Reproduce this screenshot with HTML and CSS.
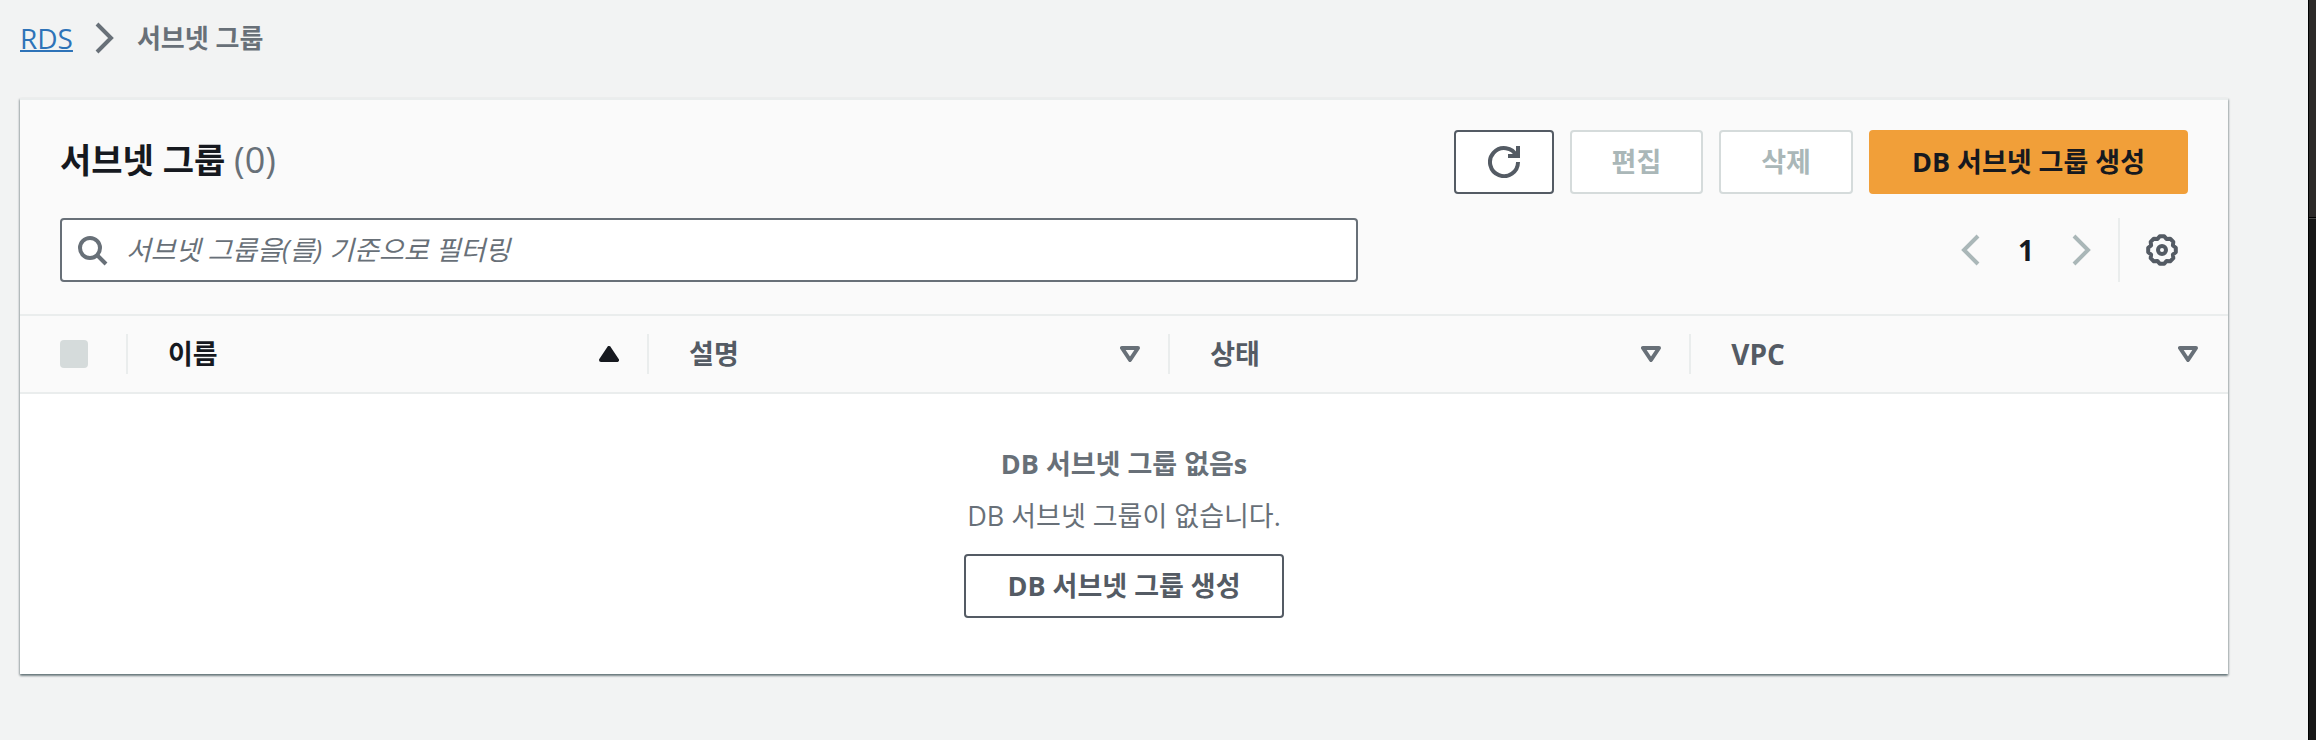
FILE: index.html
```html
<!DOCTYPE html>
<html lang="ko">
<head>
    <meta charset="UTF-8">
    <meta name="viewport" content="width=device-width, initial-scale=1.0">
    <title>RDS - 서브넷 그룹</title>
    <link rel="stylesheet" href="styles.css">
</head>
<body>
    <main class="page">
        <nav class="breadcrumb">
            <a href="#">RDS</a>
            <svg class="chevron" viewBox="0 0 16 16"><path d="M4 1l7 7-7 7"/></svg>
            <span class="current">서브넷 그룹</span>
        </nav>

        <section class="panel">
            <div class="panel-header">
                <div class="title-row">
                    <h1>서브넷 그룹 <span class="count">(0)</span></h1>
                    <div class="actions">
                        <button type="button" class="btn btn-icon" aria-label="새로 고침">
                            <svg class="icon" viewBox="0 0 16 16">
                                <path d="M10 5h5V0"/>
                                <path d="M15 8a7 7 0 1 1-.7-3"/>
                            </svg>
                        </button>
                        <button type="button" class="btn" disabled>편집</button>
                        <button type="button" class="btn" disabled>삭제</button>
                        <button type="button" class="btn btn-create btn-primary">DB 서브넷 그룹 생성</button>
                    </div>
                </div>

                <div class="filter-row">
                    <label class="search">
                        <svg class="icon" viewBox="0 0 16 16">
                            <circle cx="7" cy="7" r="5"/>
                            <path d="M10.5 10.5l4.5 4.5"/>
                        </svg>
                        <input type="text" placeholder="서브넷 그룹을(를) 기준으로 필터링" aria-label="서브넷 그룹 필터">
                    </label>
                    <div class="tools">
                        <div class="pagination">
                            <button type="button" aria-label="이전" disabled>
                                <svg class="chevron" viewBox="0 0 16 16"><path d="M12 1L5 8l7 7"/></svg>
                            </button>
                            <button type="button" class="page-number">1</button>
                            <button type="button" aria-label="다음" disabled>
                                <svg class="chevron" viewBox="0 0 16 16"><path d="M4 1l7 7-7 7"/></svg>
                            </button>
                        </div>
                        <button type="button" class="settings" aria-label="기본 설정">
                            <svg class="icon" viewBox="0 0 16 16">
                                <path d="M6.9 1.1h2.2l1.16 1.45 1.84-.21 1.56 1.56-.21 1.84L14.9 6.9v2.2l-1.45 1.16.21 1.84-1.56 1.56-1.84-.21L9.1 14.9H6.9l-1.16-1.45-1.84.21-1.56-1.56.21-1.84L1.1 9.1V6.9l1.45-1.16-.21-1.84L3.9 2.34l1.84.21z"/>
                                <circle cx="8" cy="8" r="2"/>
                            </svg>
                        </button>
                    </div>
                </div>
            </div>

            <table>
                <thead>
                    <tr>
                        <th class="select"><div class="cell"><input type="checkbox" aria-label="모두 선택" disabled></div></th>
                        <th class="sorted" aria-sort="ascending">
                            <div class="cell">이름 <svg class="sort" viewBox="0 0 20 16"><path d="M10 2l8 12H2z"/></svg></div>
                        </th>
                        <th><div class="cell">설명 <svg class="sort" viewBox="0 0 20 16"><path d="M2 2h16l-8 12z"/></svg></div></th>
                        <th><div class="cell">상태 <svg class="sort" viewBox="0 0 20 16"><path d="M2 2h16l-8 12z"/></svg></div></th>
                        <th class="last"><div class="cell latin">VPC <svg class="sort" viewBox="0 0 20 16"><path d="M2 2h16l-8 12z"/></svg></div></th>
                    </tr>
                </thead>
                <tbody>
                    <tr>
                        <td colspan="5" class="empty">
                            <p><strong>DB 서브넷 그룹 없음s</strong></p>
                            <p>DB 서브넷 그룹이 없습니다.</p>
                            <button type="button" class="btn btn-create">DB 서브넷 그룹 생성</button>
                        </td>
                    </tr>
                </tbody>
            </table>
        </section>
    </main>
    <aside class="edge"></aside>
</body>
</html>
```

FILE: styles.css
```css
* {
    box-sizing: border-box;
}
body {
    display: flex;
    min-height: 100vh;
    margin: 0;
    background-color: #f2f3f3;
    color: #687078;
    font-family: "Open Sans", "Noto Sans CJK KR", sans-serif;
    font-size: 27px;
    line-height: 44px;
}
button, input {
    font: inherit;
}
svg {
    display: block;
    flex: none;
    fill: none;
    stroke: currentColor;
    stroke-width: 2;
}
.page {
    flex: 1;
    padding: 16px 80px 66px 20px;
}
.edge {
    width: 8px;
    border-left: 1px solid #000;
    background: linear-gradient(#2c2a29 217px, #000 217px, #000 218px, #4a4a48 218px, #4a4a48 219px, #171717 219px);
}
.icon, .chevron {
    width: 32px;
    height: 32px;
}
.breadcrumb {
    display: flex;
    align-items: center;
    gap: 16px;
    margin-bottom: 38px;
}
.breadcrumb a {
    color: #2e73b8;
    font-size: 28px;
    text-decoration-thickness: 2px;
}
.breadcrumb .current {
    font-size: 26px;
    font-weight: bold;
}
.panel {
    border-top: 2px solid #eaeded;
    background-color: #fff;
    box-shadow: 0 2px 2px 0 rgba(0,28,36,0.4), 1px 1px 2px 0 rgba(0,28,36,0.2), -1px 1px 2px 0 rgba(0,28,36,0.2);
}
.panel-header {
    padding: 30px 40px 32px;
    background-color: #fafafa;
}
.title-row, .filter-row, .actions, .tools, .pagination {
    display: flex;
    align-items: center;
}
.title-row, .filter-row {
    justify-content: space-between;
}
.title-row {
    margin-bottom: 24px;
}
h1 {
    margin: 0;
    padding-bottom: 4px;
    color: #16191f;
    font-size: 34px;
}
.count {
    color: #687078;
    font-size: 36px;
    font-weight: 500;
}
.actions {
    gap: 16px;
}
.btn {
    height: 64px;
    padding: 0 40px;
    border: 2px solid #545b64;
    border-radius: 4px;
    background-color: #fff;
    color: #545b64;
    font-weight: bold;
    cursor: pointer;
}
.btn:disabled {
    border-color: #d5dbdb;
    color: #aab7b8;
    cursor: default;
}
.btn-icon {
    padding: 0 32px;
}
.btn-create {
    padding: 0 41px;
}
.btn-primary {
    border-color: #f19f39;
    background-color: #f19f39;
    color: #16191f;
}
.search {
    display: flex;
    align-items: center;
    gap: 18px;
    width: 61%;
    height: 64px;
    padding: 0 14px;
    border: 2px solid #687078;
    border-radius: 4px;
    background-color: #fff;
}
.search input {
    flex: 1;
    min-width: 0;
    padding: 0;
    border: none;
    outline: none;
    background: none;
}
.search input::placeholder {
    color: #687078;
    font-style: italic;
    opacity: 1;
}
.pagination {
    gap: 16px;
    padding-right: 20px;
}
.pagination button, .settings {
    padding: 0;
    border: none;
    background: none;
    color: #545b64;
}
.pagination button:disabled {
    color: #aab7b8;
}
.pagination .page-number {
    width: 48px;
    color: #16191f;
    font-size: 28px;
    font-weight: bold;
}
.settings {
    height: 64px;
    padding: 0 10px 0 26px;
    border-left: 2px solid #eaeded;
}
.settings .icon {
    stroke-linejoin: round;
}
table {
    width: 100%;
    table-layout: fixed;
    border-collapse: collapse;
}
thead {
    background-color: #fafafa;
}
th {
    width: 23.6%;
    padding: 18px 0;
    border-top: 2px solid #eaeded;
    border-bottom: 2px solid #eaeded;
    color: #545b64;
    text-align: left;
}
th.select {
    width: 108px;
}
th.last {
    width: auto;
}
.cell {
    display: flex;
    align-items: center;
    justify-content: space-between;
    height: 40px;
    padding: 0 28px 0 40px;
    border-right: 2px solid #eaeded;
}
.last .cell {
    padding-right: 30px;
    border-right: none;
}
.latin {
    font-size: 28px;
}
.sorted {
    color: #16191f;
}
.sort {
    width: 20px;
    height: 16px;
    stroke: #687078;
    stroke-width: 4;
    stroke-linejoin: round;
}
.sorted .sort {
    fill: #16191f;
    stroke: #16191f;
}
th input {
    width: 28px;
    height: 28px;
    margin: 0;
    border-radius: 4px;
    background-color: #d5dbdb;
    appearance: none;
}
.empty {
    padding: 48px 0 56px;
    text-align: center;
}
.empty p {
    margin: 0 0 8px;
}
.empty .btn {
    display: block;
    margin: 16px auto 0;
}
```
